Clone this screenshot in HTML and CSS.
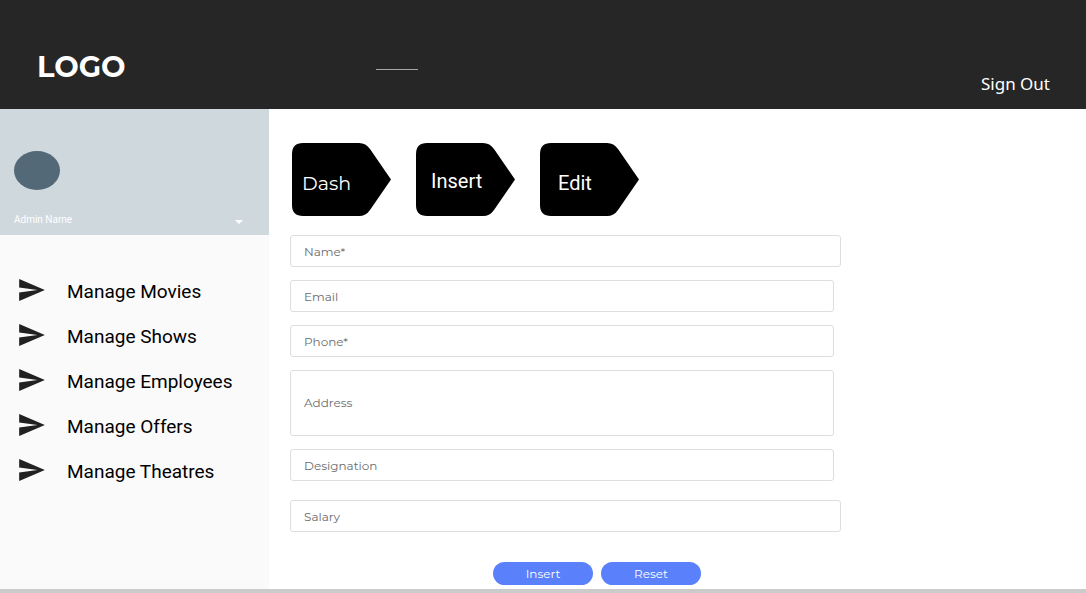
FILE: index.html
```html
<!DOCTYPE html>
<html lang="en">
<head>
<meta charset="utf-8">
<meta name="viewport" content="width=device-width, initial-scale=1">
<title>Manage Employees</title>
<link rel="stylesheet" href="styles.css">
</head>
<body>
<svg class="defs" aria-hidden="true">
  <symbol id="send" viewBox="2 3 21 18"><path d="M2.01 21L23 12 2.01 3 2 10l15 2-15 2z"/></symbol>
  <symbol id="tag" viewBox="0 0 99 73"><path d="M11 0H67Q74 0 78 6L99 36.5 78 67Q74 73 67 73H11Q0 73 0 62V11Q0 0 11 0Z"/></symbol>
</svg>
<header class="header">
  <div class="logo">LOGO</div>
  <div class="rule"></div>
  <a class="signout" href="#">Sign Out</a>
</header>
<div class="body">
  <aside class="sidebar">
    <div class="profile">
      <div class="avatar"></div>
      <button class="account" type="button"><span>Admin Name</span>
        <svg class="caret" viewBox="0 0 8 4" aria-hidden="true"><path d="M0 0h8L4 4z"/></svg>
      </button>
    </div>
    <nav class="menu">
      <a class="menu-item" href="#"><svg class="send" aria-hidden="true"><use href="#send"/></svg>Manage Movies</a>
      <a class="menu-item" href="#"><svg class="send" aria-hidden="true"><use href="#send"/></svg>Manage Shows</a>
      <a class="menu-item" href="#"><svg class="send" aria-hidden="true"><use href="#send"/></svg>Manage Employees</a>
      <a class="menu-item" href="#"><svg class="send" aria-hidden="true"><use href="#send"/></svg>Manage Offers</a>
      <a class="menu-item" href="#"><svg class="send" aria-hidden="true"><use href="#send"/></svg>Manage Theatres</a>
    </nav>
  </aside>
  <main class="main">
    <nav class="tags">
      <a class="tag tag-dash" href="#"><svg class="tag-shape" aria-hidden="true"><use href="#tag"/></svg><span class="tag-label">Dash</span></a>
      <a class="tag tag-insert" href="#"><svg class="tag-shape" aria-hidden="true"><use href="#tag"/></svg><span class="tag-label">Insert</span></a>
      <a class="tag tag-edit" href="#"><svg class="tag-shape" aria-hidden="true"><use href="#tag"/></svg><span class="tag-label">Edit</span></a>
    </nav>
    <form class="form">
      <input class="field field-wide" type="text" placeholder="Name*" aria-label="Name">
      <input class="field" type="email" placeholder="Email" aria-label="Email">
      <input class="field" type="tel" placeholder="Phone*" aria-label="Phone">
      <textarea class="field field-area" placeholder="Address" aria-label="Address"></textarea>
      <input class="field" type="text" placeholder="Designation" aria-label="Designation">
      <input class="field field-wide field-last" type="text" placeholder="Salary" aria-label="Salary">
      <div class="actions">
        <button class="action" type="submit">Insert</button>
        <button class="action" type="reset">Reset</button>
      </div>
    </form>
  </main>
</div>
<footer class="footer"></footer>
</body>
</html>
```
FILE: styles.css
```css
* {
  box-sizing: border-box;
}

body {
  margin: 0;
  min-height: 100vh;
  display: flex;
  flex-direction: column;
  background: #fff;
  font-family: Montserrat, Inter, sans-serif;
}

a {
  color: inherit;
  text-decoration: none;
}

.defs {
  display: none;
}

.header {
  display: grid;
  grid-template-columns: 339px 42px 1fr;
  align-items: start;
  padding: 48px 36px 13px 37px;
  background: #262626;
  color: #fff;
}

.logo {
  padding-top: 1px;
  font-size: 29px;
  font-weight: 700;
  line-height: 36px;
}

.rule {
  margin-top: 21px;
  border-top: 1px solid #a6a6a6;
}

.signout {
  justify-self: end;
  margin-top: 24px;
  font-family: "Noto Sans", sans-serif;
  font-size: 17px;
  line-height: 24px;
}

.body {
  flex: 1;
  display: flex;
}

.sidebar {
  flex: 0 0 269px;
  background: #fafafa;
  font-family: Roboto, sans-serif;
}

.profile {
  padding: 42px 26px 7px 14px;
  background: #cfd8dd;
}

.avatar {
  width: 46px;
  height: 39px;
  border-radius: 50%;
  background: #546977;
}

.account {
  display: flex;
  align-items: center;
  justify-content: space-between;
  width: 100%;
  margin-top: 22px;
  padding: 0;
  border: 0;
  background: none;
  color: #fff;
  font: 10px/16px Roboto, sans-serif;
}

.caret {
  width: 8px;
  height: 4px;
  margin-top: 4px;
  fill: #fff;
}

.menu {
  padding: 34px 0 34px 19px;
}

.menu-item {
  display: flex;
  align-items: center;
  gap: 22px;
  height: 45px;
  color: #000;
  font-size: 19px;
}

.send {
  width: 26px;
  height: 22px;
  margin-bottom: 3px;
  fill: #212121;
}

.main {
  flex: 1;
  min-width: 0;
  padding: 34px 21px 4px;
}

.tags {
  display: flex;
  gap: 25px;
  padding-left: 2px;
}

.tag {
  display: grid;
  align-items: center;
  color: #fff;
  font: 20px/24px Roboto, sans-serif;
}

.tag-shape,
.tag-label {
  grid-area: 1 / 1;
}

.tag-shape {
  width: 99px;
  height: 73px;
}

.tag-label {
  z-index: 1;
  padding: 2px 0 0 15px;
}

.tag-dash .tag-label {
  padding: 8px 0 0 10px;
  font-family: Montserrat, Inter, sans-serif;
  font-size: 19px;
}

.tag-edit .tag-label {
  padding: 6px 0 0 18px;
}

.form {
  display: flex;
  flex-direction: column;
  gap: 13px;
  max-width: 551px;
  margin-top: 19px;
}

.field {
  height: 32px;
  margin: 0 7px 0 0;
  padding: 0 13px;
  border: 1px solid #dedede;
  border-radius: 3px;
  background: #fff;
  color: #333;
  font: 12px/20px Montserrat, Inter, sans-serif;
}

.field::placeholder {
  color: #6c6c6c;
  opacity: 1;
}

.field-wide {
  margin-right: 0;
}

.field-area {
  height: 66px;
  padding-top: 22px;
  resize: none;
}

.field-last {
  margin-top: 6px;
}

.actions {
  display: flex;
  justify-content: center;
  gap: 8px;
  margin-top: 17px;
  padding-left: 63px;
}

.action {
  width: 100px;
  height: 23px;
  padding: 0;
  border: 0;
  border-radius: 12px;
  background: #5a80fb;
  color: #fff;
  font: 12px/20px Montserrat, Inter, sans-serif;
}

.footer {
  height: 4px;
  background: #cbcbcb;
}
```
